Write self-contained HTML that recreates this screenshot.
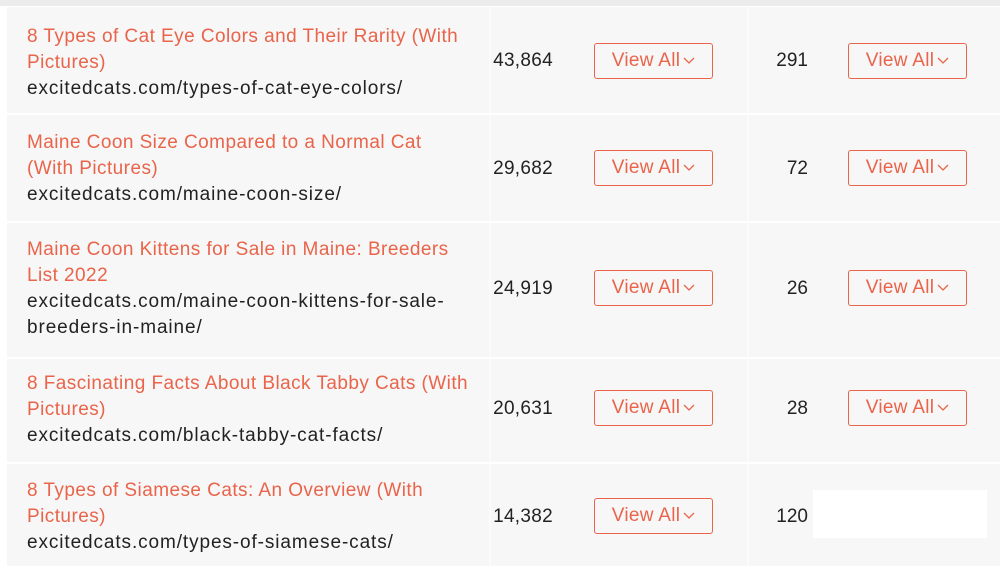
<!DOCTYPE html>
<html><head><style>
body{margin:0;width:1000px;height:566px;overflow:hidden;background:#fff;font-family:"Liberation Sans",sans-serif;position:relative}
.top{position:absolute;left:0;top:0;width:1000px;height:6px;background:#ececec}
.row{position:absolute;left:7px;width:993px;background:#f7f7f7}
.vs{position:absolute;top:0;bottom:0;width:2px;background:#fbfbfb}
.t{position:absolute;left:20px;font-size:19px;line-height:26px;color:#e9644a;width:443px;letter-spacing:0.44px}
.u{color:#222;letter-spacing:0.9px;display:block}
.n{position:absolute;right:447px;font-size:19px;color:#222;transform:translateY(-50%);letter-spacing:0.3px}
.c{position:absolute;right:192px;font-size:19px;color:#222;transform:translateY(-50%)}
.b{position:absolute;width:117px;height:34px;border:1px solid #e9644a;border-radius:3px;color:#e9644a;font-size:19px;line-height:34px;text-align:center;transform:translateY(-50%);box-sizing:content-box;letter-spacing:0.3px}
.b svg{vertical-align:middle;margin-left:3px}
</style></head><body>
<div class="top"></div>

<div class="row" style="top:7px;height:106px">
<div class="vs" style="left:482px"></div><div class="vs" style="left:740px"></div>
<div class="t" style="top:17px">8 Types of Cat Eye Colors and Their Rarity (With Pictures)<span class="u">excitedcats.com/types-of-cat-eye-colors/</span></div>
<div class="n" style="top:54px">43,864</div>
<div class="b" style="left:587px;top:54px">View All<svg width="12" height="8" viewBox="0 0 12 8"><path d="M1 1l5 5 5-5" fill="none" stroke="#e9644a" stroke-width="1.3"/></svg></div>
<div class="c" style="top:54px">291</div>
<div class="b" style="left:841px;top:54px">View All<svg width="12" height="8" viewBox="0 0 12 8"><path d="M1 1l5 5 5-5" fill="none" stroke="#e9644a" stroke-width="1.3"/></svg></div>
</div>

<div class="row" style="top:115px;height:106px">
<div class="vs" style="left:482px"></div><div class="vs" style="left:740px"></div>
<div class="t" style="top:15px">Maine Coon Size Compared to a Normal Cat (With Pictures)<span class="u">excitedcats.com/maine-coon-size/</span></div>
<div class="n" style="top:54px">29,682</div>
<div class="b" style="left:587px;top:53px">View All<svg width="12" height="8" viewBox="0 0 12 8"><path d="M1 1l5 5 5-5" fill="none" stroke="#e9644a" stroke-width="1.3"/></svg></div>
<div class="c" style="top:54px">72</div>
<div class="b" style="left:841px;top:53px">View All<svg width="12" height="8" viewBox="0 0 12 8"><path d="M1 1l5 5 5-5" fill="none" stroke="#e9644a" stroke-width="1.3"/></svg></div>
</div>

<div class="row" style="top:223px;height:134px">
<div class="vs" style="left:482px"></div><div class="vs" style="left:740px"></div>
<div class="t" style="top:14px">Maine Coon Kittens for Sale in Maine: Breeders List 2022<span class="u">excitedcats.com/maine-coon-kittens-for-sale-<br>breeders-in-maine/</span></div>
<div class="n" style="top:66px">24,919</div>
<div class="b" style="left:587px;top:65px">View All<svg width="12" height="8" viewBox="0 0 12 8"><path d="M1 1l5 5 5-5" fill="none" stroke="#e9644a" stroke-width="1.3"/></svg></div>
<div class="c" style="top:66px">26</div>
<div class="b" style="left:841px;top:65px">View All<svg width="12" height="8" viewBox="0 0 12 8"><path d="M1 1l5 5 5-5" fill="none" stroke="#e9644a" stroke-width="1.3"/></svg></div>
</div>

<div class="row" style="top:359px;height:103px">
<div class="vs" style="left:482px"></div><div class="vs" style="left:740px"></div>
<div class="t" style="top:12px">8 Fascinating Facts About Black Tabby Cats (With Pictures)<span class="u">excitedcats.com/black-tabby-cat-facts/</span></div>
<div class="n" style="top:50px">20,631</div>
<div class="b" style="left:587px;top:49px">View All<svg width="12" height="8" viewBox="0 0 12 8"><path d="M1 1l5 5 5-5" fill="none" stroke="#e9644a" stroke-width="1.3"/></svg></div>
<div class="c" style="top:50px">28</div>
<div class="b" style="left:841px;top:49px">View All<svg width="12" height="8" viewBox="0 0 12 8"><path d="M1 1l5 5 5-5" fill="none" stroke="#e9644a" stroke-width="1.3"/></svg></div>
</div>

<div class="row" style="top:464px;height:102px">
<div class="vs" style="left:482px"></div><div class="vs" style="left:740px"></div>
<div class="t" style="top:14px">8 Types of Siamese Cats: An Overview (With Pictures)<span class="u">excitedcats.com/types-of-siamese-cats/</span></div>
<div class="n" style="top:53px">14,382</div>
<div class="b" style="left:587px;top:52px">View All<svg width="12" height="8" viewBox="0 0 12 8"><path d="M1 1l5 5 5-5" fill="none" stroke="#e9644a" stroke-width="1.3"/></svg></div>
<div class="c" style="top:53px">120</div>
<div style="position:absolute;left:806px;top:26px;width:174px;height:48px;background:#fff"></div>
</div>
</body></html>
